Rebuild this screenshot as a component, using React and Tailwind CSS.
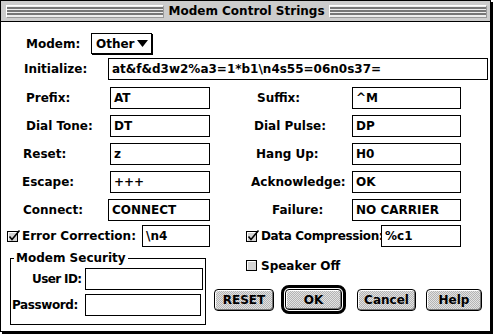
const rows = [
  { l: 'Prefix:', lw: 'w-[109px] pl-[25px]', fw: 'w-[100px]', v: 'AT', r: 'Suffix:', rp: 'pl-[47px]', rv: '^M' },
  { l: 'Dial Tone:', lw: 'w-[109px] pl-[25px]', fw: 'w-[100px]', v: 'DT', r: 'Dial Pulse:', rp: 'pl-[44px]', rv: 'DP' },
  { l: 'Reset:', lw: 'w-[109px] pl-[22px]', fw: 'w-[100px]', v: 'z', r: 'Hang Up:', rp: 'pl-[46px]', rv: 'H0' },
  { l: 'Escape:', lw: 'w-[109px] pl-[21px]', fw: 'w-[100px]', v: '+++', r: 'Acknowledge:', rp: 'pl-[41px]', rv: 'OK' },
  { l: 'Connect:', lw: 'w-[107px] pl-[22px]', fw: 'w-[102px]', v: 'CONNECT', r: 'Failure:', rp: 'pl-[62px]', rv: 'NO CARRIER' },
];

function Field({ value, className = '' }) {
  return (
    <div className={`h-[22px] border border-black bg-white pl-[3px] flex items-center whitespace-nowrap overflow-hidden ${className}`}>
      {value}
    </div>
  );
}

function Stripes() {
  return (
    <div className="flex-1 h-[13px] bg-[#eeeeee] border-t border-l border-[#ffffff] border-r border-b border-r-[#999999] border-b-[#999999] flex flex-col justify-between py-px">
      {[0, 1, 2, 3, 4, 5].map((i) => (
        <div key={i} className="h-px bg-[#777777]" />
      ))}
    </div>
  );
}

function CheckBox({ checked }) {
  return (
    <svg width="14" height="13" viewBox="0 0 14 13" className="shrink-0">
      <rect x="0.5" y="1.5" width="10" height="10" fill="#d4d4d4" stroke="#000" />
      <path d="M1.5 10.5V2.5H9.5" stroke="#fff" fill="none" />
      {checked && (
        <path d="M2.5 6.5L5 9.5L12.5 0.5" stroke="#000" strokeWidth="1.6" fill="none" />
      )}
    </svg>
  );
}

function Button({ children, className = '' }) {
  return (
    <div
      className={`h-[22px] rounded-[4px] border border-black bg-[image:repeating-conic-gradient(#b4b4b4_0_25%,#e2e2e2_0_50%)] bg-[length:2px_2px] shadow-[inset_1px_1px_0_#ffffff,inset_-1px_-1px_0_#777777] flex items-center justify-center ${className}`}
    >
      {children}
    </div>
  );
}

export default function App() {
  return (
    <div className="w-[493px] h-[334px] bg-white font-['DejaVu_Sans',sans-serif] font-bold text-[12px] leading-none text-black">
      <div className="w-[491px] h-[332px] border border-black shadow-[2px_2px_0_#000] flex flex-col bg-white">
        {/* title bar */}
        <div className="h-[21px] shrink-0 bg-[#cccccc] border-b border-black flex items-center pl-[5px] pr-[3px] gap-[4px]">
          <Stripes />
          <span className="whitespace-nowrap">Modem Control Strings</span>
          <Stripes />
        </div>

        <div className="flex-1 flex flex-col pt-[11px]">
          {/* modem popup */}
          <div className="flex items-center h-[21px]">
            <div className="w-[90px] pl-[25px]">Modem:</div>
            <div className="w-[61px] h-[21px] border border-black shadow-[1px_1px_0_#000] flex items-center pl-[4px] gap-[2px]">
              <span>Other</span>
              <svg width="11" height="7" viewBox="0 0 11 7">
                <polygon points="0,0 11,0 5.5,7" fill="#000" />
              </svg>
            </div>
          </div>

          {/* initialize */}
          <div className="flex items-center mt-[4px]">
            <div className="w-[107px] pl-[23px]">Initialize:</div>
            <Field value="at&f&d3w2%a3=1*b1\n4s55=06n0s37=" className="w-[380px]" />
          </div>

          {/* string rows */}
          <div className="flex flex-col gap-[6px] mt-[7px]">
            {rows.map((row) => (
              <div key={row.l} className="flex items-center">
                <div className="w-[209px] flex items-center">
                  <div className={`whitespace-nowrap ${row.lw}`}>{row.l}</div>
                  <Field value={row.v} className={row.fw} />
                </div>
                <div className={`w-[142px] whitespace-nowrap ${row.rp}`}>{row.r}</div>
                <Field value={row.rv} className="w-[109px]" />
              </div>
            ))}
          </div>

          {/* error correction / data compression */}
          <div className="flex items-center mt-[4px]">
            <div className="w-[209px] flex items-center">
              <div className="w-[141px] pl-[6px] flex items-center gap-[1px] whitespace-nowrap">
                <CheckBox checked />
                <span>Error Correction:</span>
              </div>
              <Field value="\n4" className="w-[68px]" />
            </div>
            <div className="w-[171px] pl-[36px] flex items-center gap-[1px] whitespace-nowrap">
              <CheckBox checked />
              <span className="tracking-[-0.35px]">Data Compression:</span>
            </div>
            <Field value="%c1" className="w-[80px] h-[21px]" />
          </div>

          {/* bottom section */}
          <div className="flex mt-[5px]">
            <fieldset className="ml-[9px] w-[196px] h-[73px] border border-black pb-[7px]">
              <legend className="ml-[3px] px-[2px] leading-[12px]">Modem Security</legend>
              <div className="flex items-center mt-[4px]">
                <div className="w-[74px] pl-[21px] whitespace-nowrap tracking-[-0.6px]">User ID:</div>
                <Field value="" className="w-[118px]" />
              </div>
              <div className="flex items-center mt-[4px]">
                <div className="w-[74px] pl-[1px] whitespace-nowrap tracking-[-0.4px]">Password:</div>
                <Field value="" className="w-[116px]" />
              </div>
            </fieldset>

            <div className="flex flex-col ml-[8px]">
              <div className="flex items-center gap-[1px] pl-[32px] mt-[7px] h-[13px]">
                <CheckBox />
                <span>Speaker Off</span>
              </div>
              <div className="flex items-center h-[29px] mt-[13px]">
                <Button className="w-[60px]">RESET</Button>
                <div className="ml-[7px] w-[65px] h-[29px] rounded-[8px] border-[3px] border-black p-px flex">
                  <Button className="flex-1 h-auto">OK</Button>
                </div>
                <Button className="ml-[11px] w-[59px] h-[21px]">Cancel</Button>
                <Button className="ml-[10px] w-[56px] h-[21px]">Help</Button>
              </div>
            </div>
          </div>
        </div>
      </div>
    </div>
  );
}
